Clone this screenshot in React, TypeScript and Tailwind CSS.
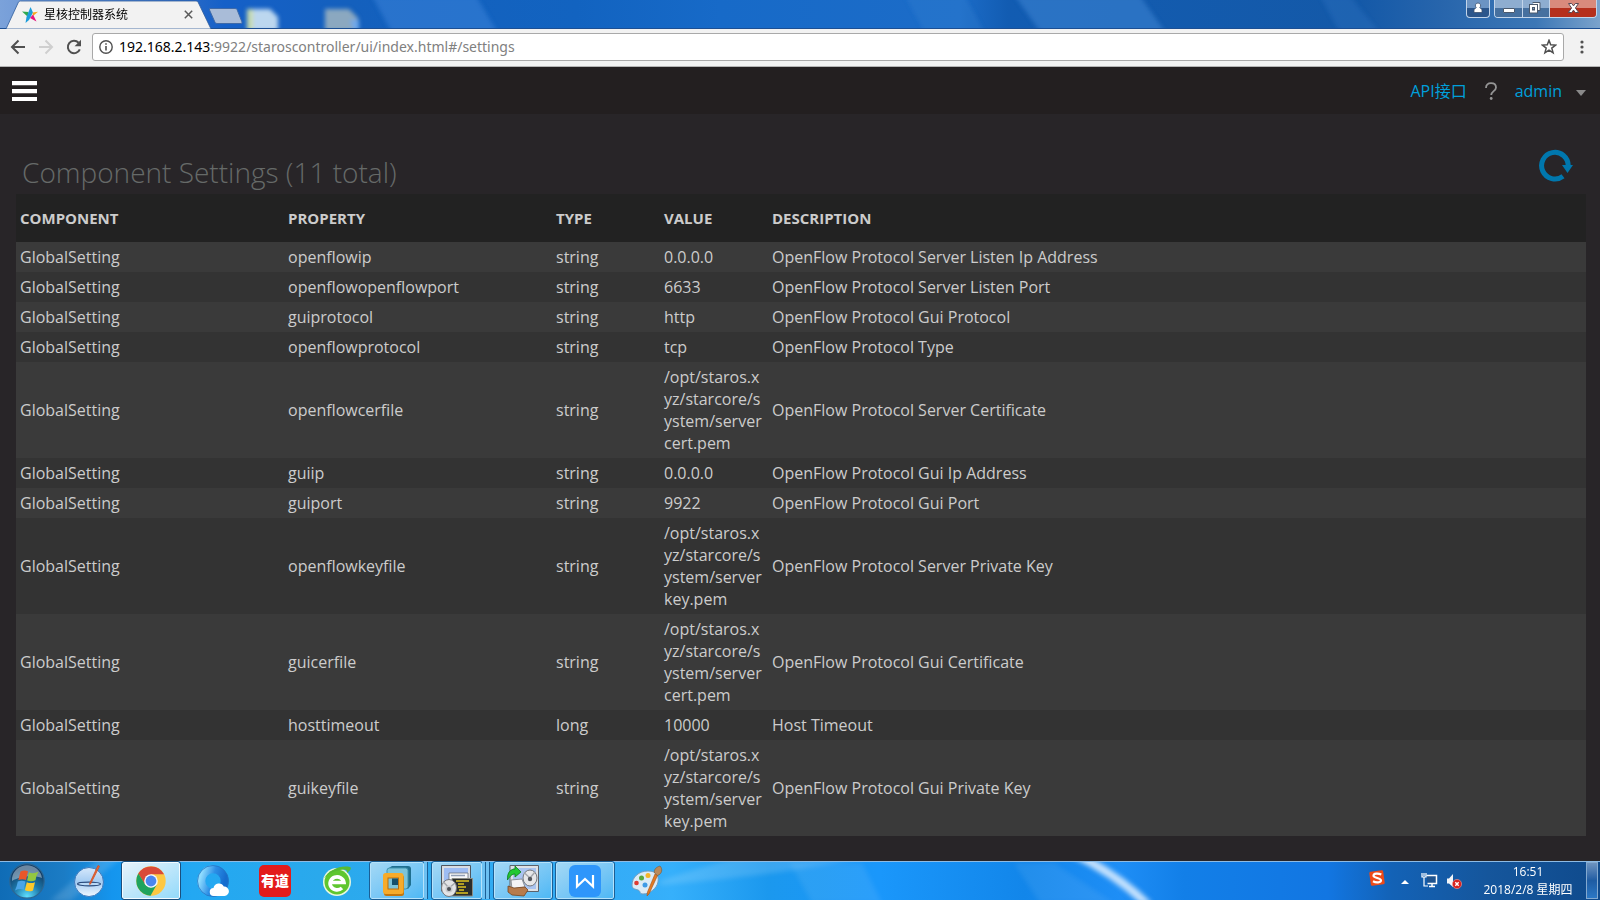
import type { ReactNode } from "react";

type Setting = {
  component: string;
  property: string;
  type: string;
  value: string;
  description: string;
};

const row = (property: string, type: string, value: string, description: string): Setting => ({
  component: "GlobalSetting",
  property,
  type,
  value,
  description,
});

const CERT = "/opt/staros.xyz/starcore/system/servercert.pem";
const KEY = "/opt/staros.xyz/starcore/system/serverkey.pem";

const settings: Setting[] = [
  row("openflowip", "string", "0.0.0.0", "OpenFlow Protocol Server Listen Ip Address"),
  row("openflowopenflowport", "string", "6633", "OpenFlow Protocol Server Listen Port"),
  row("guiprotocol", "string", "http", "OpenFlow Protocol Gui Protocol"),
  row("openflowprotocol", "string", "tcp", "OpenFlow Protocol Type"),
  row("openflowcerfile", "string", CERT, "OpenFlow Protocol Server Certificate"),
  row("guiip", "string", "0.0.0.0", "OpenFlow Protocol Gui Ip Address"),
  row("guiport", "string", "9922", "OpenFlow Protocol Gui Port"),
  row("openflowkeyfile", "string", KEY, "OpenFlow Protocol Server Private Key"),
  row("guicerfile", "string", CERT, "OpenFlow Protocol Gui Certificate"),
  row("hosttimeout", "long", "10000", "Host Timeout"),
  row("guikeyfile", "string", KEY, "OpenFlow Protocol Gui Private Key"),
];

/* ---------- Browser window ---------- */

function SkyBackdrop() {
  return (
    <svg className="absolute inset-0 h-full w-full" viewBox="0 0 1600 29" preserveAspectRatio="none" aria-hidden="true">
      <defs>
        <linearGradient id="sky">
          <stop offset="0" stopColor="#7ba2da" />
          <stop offset="0.05" stopColor="#5f8dd2" />
          <stop offset="0.11" stopColor="#2f6cc6" />
          <stop offset="0.14" stopColor="#1560c8" />
          <stop offset="0.22" stopColor="#1460bd" />
          <stop offset="0.36" stopColor="#1263c0" />
          <stop offset="0.45" stopColor="#176ac8" />
          <stop offset="0.6" stopColor="#1c6cc8" />
          <stop offset="0.63" stopColor="#125cb2" />
          <stop offset="0.85" stopColor="#1459a8" />
          <stop offset="0.9" stopColor="#2765ac" />
          <stop offset="0.96" stopColor="#3c77b6" />
          <stop offset="1" stopColor="#7ba3cc" />
        </linearGradient>
        <filter id="soft">
          <feGaussianBlur stdDeviation="2" />
        </filter>
      </defs>
      <rect width="1600" height="29" fill="url(#sky)" />
      <g filter="url(#soft)">
        <path d="M372-4h104l22 37h-106z" fill="#3b86dc" opacity="0.500" />
        <path d="M905-4h60l20 37h-60z" fill="#3d86d4" opacity="0.250" />
        <path d="M1015-4h125l26 37h-125z" fill="#3f8ad8" opacity="0.500" />
        <path d="M1320-4h30l30 37h-40z" fill="#3f8ad8" opacity="0.200" />
        <path d="M248 9h22l8 8v14h-30z" fill="#bcd7ef" />
        <path d="M247 9h6v22h-6z" fill="#c9dcae" />
        <path d="M325 9h24l9 9v13h-33z" fill="#8ba8c0" />
        <path d="M350 20h9v11h-5z" fill="#6fa8ea" />
      </g>
      <rect y="28" width="1600" height="1" fill="#1c4f93" />
    </svg>
  );
}

function WindowButtons() {
  return (
    <div className="relative flex items-start gap-1 pr-[3px]">
      <button aria-label="Profile" className="h-[18px] w-6 rounded-b-[4px] border border-t-0 border-[#c3d5ea] bg-linear-to-b from-[#6c94c3] from-45% to-[#2b568c] to-50%">
        <svg viewBox="0 0 22 17" className="h-[17px] w-[22px]" aria-hidden="true">
          <path d="M11 3a2.6 2.6 0 0 1 1.700 4.600L15 9.500v3H7v-3l2.300-1.900A2.600 2.600 0 0 1 11 3z" fill="#fff" stroke="#3c5270" strokeWidth="0.800" />
        </svg>
      </button>
      <div className="flex h-[18px] overflow-hidden rounded-b-[4px] border border-t-0 border-[#c3d5ea]">
        <button aria-label="Minimize" className="w-7 border-r border-[#c3d5ea] bg-linear-to-b from-[#8eadd0] from-45% to-[#46709f] to-50%">
          <svg viewBox="0 0 27 17" className="h-[17px] w-[27px]" aria-hidden="true">
            <rect x="8.500" y="8.500" width="11" height="4" rx="0.500" fill="#fff" stroke="#4b5a6e" />
          </svg>
        </button>
        <button aria-label="Restore" className="w-[27px] border-r border-[#c3d5ea] bg-linear-to-b from-[#8eadd0] from-45% to-[#46709f] to-50%">
          <svg viewBox="0 0 26 17" className="h-[17px] w-[26px]" aria-hidden="true">
            <path d="M9.500 2.500h7.500v8h-2" fill="#fff" stroke="#4b5a6e" />
            <rect x="6.500" y="4.500" width="8" height="8.500" fill="#fff" stroke="#4b5a6e" />
            <rect x="9.500" y="7.500" width="2" height="2.500" fill="#7e9cc0" stroke="#4b5a6e" />
          </svg>
        </button>
        <button aria-label="Close" className="w-[46px] bg-linear-to-b from-[#d98a7c] from-45% to-[#b52f1c] to-50%">
          <svg viewBox="0 0 46 17" className="h-[17px] w-[46px]" aria-hidden="true">
            <path d="M18.500 3.500h3.200l1.800 2.400 1.800-2.400h3.200L25.400 8l3.300 4.500h-3.400l-1.800-2.400-1.800 2.400h-3.400L21.600 8z" fill="#fff" stroke="#5a4a55" />
          </svg>
        </button>
      </div>
    </div>
  );
}

function TabStrip() {
  return (
    <div className="relative flex h-[29px] justify-between">
      <SkyBackdrop />
      <div className="relative flex pl-1.5">
        <div className="relative flex h-[29px] w-[206px] items-center pr-4 pl-4">
          <svg className="absolute inset-0 h-full w-full" viewBox="0 0 206 29" aria-hidden="true">
            <path d="M0 29 12.500 2Q13 1 14.500 1H190q1.500 0 2 1l13 27z" fill="#f2f2f2" stroke="#2f5c9a" strokeWidth="0.800" />
          </svg>
          <svg viewBox="0 0 16 16" className="relative h-4 w-4" aria-hidden="true">
            <path d="M0 4.500 6.500 5 6 10z" fill="#2fa84f" />
            <path d="M8.500 0 11 5.500 7 13l-3.500 3 1-6z" fill="#1b9ddb" />
            <path d="M10.500 5.500 16 4.800 11 9z" fill="#f6a71c" />
            <path d="M11 7.500 14.500 14.500 8 11z" fill="#e5157f" />
          </svg>
          <span className="relative ml-1.5 flex-1 text-[12px] leading-4 text-black">星核控制器系统</span>
          <button aria-label="Close tab" className="relative flex h-4 w-4 items-center justify-center">
            <svg viewBox="0 0 9 9" className="h-[9px] w-[9px]" aria-hidden="true">
              <path d="M.8.800 8.200 8.200M8.200.800.800 8.200" stroke="#5a5a5a" strokeWidth="1.500" />
            </svg>
          </button>
        </div>
        <button aria-label="New tab" className="mt-2 -ml-1 h-4 w-9">
          <svg viewBox="0 0 36 16" className="h-4 w-9" aria-hidden="true">
            <path d="M2 .500h25q1.500 0 2 1l5 12.500q.5 1.500-1 1.500H9q-1.500 0-2-1.200L1.500 2Q1 .500 2 .500z" fill="#a9bcd8" stroke="#3f6aa8" />
          </svg>
        </button>
      </div>
      <WindowButtons />
    </div>
  );
}

function AddressBar() {
  return (
    <div className="flex h-[38px] items-start border-b border-[#b4b4b4] bg-[#f2f2f2] pt-1 pr-2">
      <div className="flex h-7 items-center gap-1 px-1.5">
        <button aria-label="Back" className="flex h-6 w-6 items-center justify-center">
          <svg viewBox="0 0 16 16" className="h-4 w-4" aria-hidden="true">
            <path d="M15 8H2.500M8.500 1.500 2 8l6.500 6.500" fill="none" stroke="#505050" strokeWidth="2" />
          </svg>
        </button>
        <button aria-label="Forward" className="flex h-6 w-6 items-center justify-center">
          <svg viewBox="0 0 16 16" className="h-4 w-4" aria-hidden="true">
            <path d="M1 8h12.500M7.500 1.500 14 8l-6.500 6.500" fill="none" stroke="#cfcfcf" strokeWidth="2" />
          </svg>
        </button>
        <button aria-label="Reload" className="flex h-6 w-6 items-center justify-center">
          <svg viewBox="0 0 16 16" className="h-4 w-4" aria-hidden="true">
            <path d="M13.800 10.300A6.200 6.200 0 1 1 12.600 3.800" fill="none" stroke="#505050" strokeWidth="2" />
            <path d="M15 .800v6.400H8.600z" fill="#505050" />
          </svg>
        </button>
      </div>
      <div className="flex h-7 flex-1 items-center rounded-[3px] border border-[#a9a9a9] bg-white px-1.5">
        <svg viewBox="0 0 14 14" className="h-3.5 w-3.5" aria-hidden="true">
          <circle cx="7" cy="7" r="6.200" fill="none" stroke="#505050" strokeWidth="1.400" />
          <path d="M7 6v4.500M7 3.300v1.500" stroke="#505050" strokeWidth="1.600" />
        </svg>
        <a href="#/settings" className="ml-1.5 flex-1 font-['Noto_Sans',sans-serif] text-[14px] leading-5 text-[#808080]">
          <span className="text-black">192.168.2.143</span>:9922/staroscontroller/ui/index.html#/settings
        </a>
        <button aria-label="Bookmark this page">
          <svg viewBox="0 0 16 16" className="h-4 w-4" aria-hidden="true">
            <path d="m8 1.300 1.700 4.500 4.900.3-3.800 3 1.300 4.700L8 11.200l-4.100 2.600 1.300-4.700-3.800-3 4.900-.3z" fill="none" stroke="#505050" strokeWidth="1.500" />
          </svg>
        </button>
      </div>
      <button aria-label="Browser menu" className="ml-2 flex h-7 w-5 items-center justify-center">
        <svg viewBox="0 0 4 14" className="h-3.5 w-1" aria-hidden="true">
          <g fill="#505050">
            <circle cx="2" cy="2" r="1.600" />
            <circle cx="2" cy="7" r="1.600" />
            <circle cx="2" cy="12" r="1.600" />
          </g>
        </svg>
      </button>
    </div>
  );
}

/* ---------- Application ---------- */

function Masthead() {
  return (
    <header className="flex h-[47px] items-center justify-between bg-[#231f20] pr-3.5 pl-3">
      <button aria-label="Menu" className="flex w-[25px] flex-col gap-[3px]">
        <span className="h-[5px] w-full border-b border-[#5c5859] bg-white" />
        <span className="h-[5px] w-full border-b border-[#5c5859] bg-white" />
        <span className="h-1 w-full bg-white" />
      </button>
      <nav className="flex items-center text-[16px] leading-6 text-[#009fdb]">
        <a href="#/api">API接口</a>
        <a href="#/help" aria-label="Help" className="mx-4 block w-4">
          <svg viewBox="0 0 16 20" className="h-5 w-4" aria-hidden="true">
            <path d="M3 7C3 3.800 5 2.200 8 2.200s5 1.600 5 4.300c0 3.500-4.800 3.800-4.800 7.500" fill="none" stroke="#959595" strokeWidth="1.800" />
            <circle cx="8.200" cy="17.500" r="1.400" fill="#959595" />
          </svg>
        </a>
        <button className="flex items-center gap-3.5">
          admin
          <svg viewBox="0 0 10 6" className="mt-1 h-1.5 w-2.5" aria-hidden="true">
            <path d="M0 0h10L5 6z" fill="#8a8a8a" />
          </svg>
        </button>
      </nav>
    </header>
  );
}

function SettingsTable() {
  return (
    <table className="w-full table-fixed border-collapse text-left text-[16px] leading-[22px] text-[#cccccc]">
      <colgroup>
        <col className="w-[268px]" />
        <col className="w-[268px]" />
        <col className="w-[108px]" />
        <col className="w-[108px]" />
        <col />
      </colgroup>
      <thead className="bg-[#222222] text-[15px]">
        <tr className="h-12">
          {["COMPONENT", "PROPERTY", "TYPE", "VALUE", "DESCRIPTION"].map((h) => (
            <th key={h} scope="col" className="px-1 font-bold">
              {h}
            </th>
          ))}
        </tr>
      </thead>
      <tbody>
        {settings.map((s) => (
          <tr key={s.property} className="bg-[#333333] odd:bg-[#3a3a3a]">
            <td className="p-1">{s.component}</td>
            <td className="p-1">{s.property}</td>
            <td className="p-1">{s.type}</td>
            <td className="p-1 break-all">{s.value}</td>
            <td className="p-1">{s.description}</td>
          </tr>
        ))}
      </tbody>
    </table>
  );
}

function SettingsPage() {
  return (
    <main className="flex-1 px-4 pr-3.5 pt-8">
      <div className="flex h-12 items-center justify-between pr-3 pl-1.5">
        <h1 className="pt-1 text-[28px] leading-9 font-light text-[#666a68]">Component Settings (11 total)</h1>
        <button aria-label="Refresh" className="mb-2">
          <svg viewBox="0 0 36 34" className="h-[34px] w-9" aria-hidden="true">
            <path d="M30.200 17A13.300 13.300 0 1 0 25 27.200" fill="none" stroke="#0077ad" strokeWidth="5" />
            <path d="M24 16h11l-5.500 8z" fill="#0077ad" />
          </svg>
        </button>
      </div>
      <SettingsTable />
    </main>
  );
}

/* ---------- Taskbar ---------- */

function StartOrb() {
  return (
    <svg viewBox="0 0 36 36" className="h-9 w-9" aria-hidden="true">
      <defs>
        <radialGradient id="orb" cx="0.5" cy="0.95" r="0.8">
          <stop offset="0" stopColor="#5fe0ff" />
          <stop offset="0.5" stopColor="#1b78ab" />
          <stop offset="1" stopColor="#123a62" />
        </radialGradient>
      </defs>
      <circle cx="18" cy="18" r="17.200" fill="url(#orb)" stroke="#2d6794" strokeWidth="1.200" />
      <path d="M3 15a15.200 15.200 0 0 1 30 0c-7-3-22-2-30 3z" fill="#dbe9f2" opacity="0.450" />
      <path d="M11.500 8.500q4-2 7.500-.2l-2 8.800q-3.500-1.800-7.700 0z" fill="#e8572a" />
      <path d="M20 9.300q4 2 9.500-.6-2.500 4-3 8.600-4 1.700-8.400.3z" fill="#93c740" />
      <path d="M8.800 18.600q4-1.800 7.700 0l-1.800 8.200q-3.600-1.700-8.700.6 2-4 2.800-8.800z" fill="#4aa5e8" />
      <path d="M17.800 19.200q4 1.700 8.200 0l-2 8.300q-4 1.800-8.100-.2z" fill="#fdc92b" />
    </svg>
  );
}

function PenOrbIcon() {
  return (
    <svg viewBox="0 0 34 34" className="h-[34px] w-[34px]" aria-hidden="true">
      <defs>
        <linearGradient id="penorb" x2="0" y2="1">
          <stop offset="0" stopColor="#d5e8fb" />
          <stop offset="0.5" stopColor="#a3cbf2" />
          <stop offset="1" stopColor="#f0f8ff" />
        </linearGradient>
      </defs>
      <circle cx="17" cy="18" r="14.500" fill="url(#penorb)" stroke="#3c79bd" />
      <ellipse cx="17" cy="20" rx="11.500" ry="1.800" fill="#b9d9f6" stroke="#28497a" strokeWidth="1.200" />
      <path d="m26 1.500 1.500.8L18.500 20l-.8.500v-1.200z" fill="#e96a35" stroke="#cf4b1f" strokeWidth="0.800" />
    </svg>
  );
}

function ChromeIcon() {
  return (
    <svg viewBox="0 0 30 30" className="h-[30px] w-[30px]" aria-hidden="true">
      <circle cx="15" cy="15" r="14.700" fill="#fdc843" />
      <path d="M2.300 7.600A14.700 14.700 0 0 1 28 8.300H15L9 18.500z" fill="#d94a38" />
      <path d="M2.300 7.600A14.700 14.700 0 0 0 14.500 29.700L20.800 18.500l-6 3-5.700-3.200z" fill="#1ea35e" />
      <circle cx="15" cy="15" r="6.800" fill="#f5f8fd" />
      <circle cx="15" cy="15" r="5.400" fill="#4b86ee" />
    </svg>
  );
}

function CloudRingIcon() {
  return (
    <svg viewBox="0 0 32 32" className="h-8 w-8" aria-hidden="true">
      <defs>
        <linearGradient id="ring" x1="0" y1="0.2" x2="1" y2="0.5">
          <stop offset="0" stopColor="#8fdcff" />
          <stop offset="0.5" stopColor="#2c8fe6" />
          <stop offset="1" stopColor="#156cce" />
        </linearGradient>
      </defs>
      <circle cx="16" cy="16" r="11.700" fill="none" stroke="url(#ring)" strokeWidth="8" />
      <circle cx="16" cy="16" r="15.500" fill="none" stroke="#2476c4" strokeWidth="0.800" />
      <path d="M17 31a4 4 0 0 1-.5-8 5.500 5.500 0 0 1 10.300-1.500A4.700 4.700 0 0 1 27.500 31z" fill="#fff" />
    </svg>
  );
}

function YoudaoIcon() {
  return (
    <span className="flex h-8 w-8 items-center justify-center rounded-[5px] bg-[#e31b1b] text-[14px] leading-8 font-black whitespace-nowrap text-white">
      有道
    </span>
  );
}

function GreenBrowserIcon() {
  return (
    <svg viewBox="0 0 32 32" className="h-8 w-8" aria-hidden="true">
      <circle cx="16" cy="17" r="14" fill="#e9f8df" />
      <circle cx="16" cy="17" r="12.500" fill="#5fc62e" />
      <path d="M9.500 17.500H23a7 6.500 0 1 0-2 5.500" fill="none" stroke="#fff" strokeWidth="3.600" />
      <path d="M3 13C9 5 19 0 29 2c2 1 0 4-3 6 1-4-3-4-7-3C12 6.500 7 9 3 13z" fill="#57bb32" />
    </svg>
  );
}

function VirtualMachineIcon() {
  return (
    <svg viewBox="0 0 32 32" className="h-8 w-8" aria-hidden="true">
      <path d="m8 3 3-2h16q3 0 3 3v16l-3 4H8z" fill="#1f6f90" />
      <rect x="6" y="3" width="21" height="21" rx="2.500" fill="#7cc4da" stroke="#3e93b0" />
      <rect x="15" y="11" width="7" height="8" fill="#14506c" />
      <rect x="3" y="10" width="20" height="21" rx="2.500" fill="#c4760d" />
      <rect x="2" y="8" width="20.500" height="21" rx="2.500" fill="#f6ab2b" />
      <rect x="7" y="13" width="10.500" height="11" fill="#7cc4da" stroke="#b76e0e" />
      <rect x="11" y="13.500" width="6" height="6.500" fill="#14506c" />
    </svg>
  );
}

function TerminalDiskIcon() {
  return (
    <svg viewBox="0 0 32 32" className="h-8 w-8" aria-hidden="true">
      <path d="M.5.500h29V26H.5z" fill="#d9dde3" stroke="#4f565f" />
      <path d="M3 3h24v18H3z" fill="#9dbcf3" />
      <path d="M8 8h19v10H8z" fill="#f6f7f9" stroke="#6b727b" strokeWidth="0.800" />
      <path d="M10 10.500h14" stroke="#909eb5" strokeWidth="1.500" />
      <path d="M11 13.500h20.500V31H11z" fill="#2b2d2c" stroke="#8a8c84" />
      <path d="M15 16h13M17 19h6M17 22h8M18 25h5M15 28h12" stroke="#e0c321" strokeWidth="1.500" />
      <ellipse cx="8" cy="23" rx="7.500" ry="8.500" fill="#e3e4e6" stroke="#74777c" />
      <path d="M2 16.500 8 23l6-5" stroke="#a5a8ad" strokeWidth="1.500" fill="none" />
      <circle cx="8" cy="24" r="3.500" fill="#c6c8cc" />
      <circle cx="8" cy="24" r="2" fill="#4e5156" />
    </svg>
  );
}

function DiskTransferIcon() {
  return (
    <svg viewBox="0 0 32 32" className="h-8 w-8" aria-hidden="true">
      <path d="M3 .500h28.500v26H3z" fill="#dfe2e6" stroke="#5b626b" />
      <path d="M6 3h23v21H6z" fill="#a9c4f0" />
      <ellipse cx="23" cy="13" rx="7" ry="8" fill="#e6e7e9" stroke="#74777c" />
      <path d="M17 7.500 23 13l5-6" stroke="#a5a8ad" strokeWidth="1.500" fill="none" />
      <circle cx="23" cy="14" r="2.200" fill="#55585d" />
      <path d="M.5 15C0 7 4 4 8 4V1l6 6-6 5V9c-3 0-5 2-7.500 6z" fill="#22c832" stroke="#0f7a1c" strokeWidth="0.800" />
      <path d="m4 15 11-1 3 8-13 2z" fill="#f4f4f6" stroke="#7a7d83" strokeWidth="0.800" />
      <path d="m1 21 6 2 11-1 3 3-4 6-12-1-4-3z" fill="#b77b4c" stroke="#76451f" strokeWidth="0.800" />
    </svg>
  );
}

function OfficeIcon() {
  return (
    <svg viewBox="0 0 32 32" className="h-8 w-8" aria-hidden="true">
      <rect width="32" height="32" rx="6" fill="#2e96fb" />
      <path d="M8 10v11.500l8-7.500 8 7.500V10" fill="none" stroke="#fff" strokeWidth="2.200" />
    </svg>
  );
}

function PaintIcon() {
  return (
    <svg viewBox="0 0 32 32" className="h-8 w-8" aria-hidden="true">
      <path d="M1 20C1 12 8 6 17 6s11 5 10 11-8 12-15 12c-4 0-2-3-5-4s-6-1-6-5z" fill="#dcebf6" stroke="#6f9cc0" />
      <circle cx="5.500" cy="18" r="2.300" fill="#df3b31" />
      <circle cx="10.500" cy="13" r="2.500" fill="#58a83e" />
      <circle cx="17" cy="10.500" r="2.500" fill="#f5b527" />
      <circle cx="14" cy="20" r="2.500" fill="#3f9be6" />
      <path d="m24 9 2.500 1.500L18 29l-2 2 .5-4z" fill="#e27a24" stroke="#a8500f" strokeWidth="0.600" />
      <path d="M23.500 8C22.500 5 25 2 29 1c3 3 2 8-2.500 9.500z" fill="#b98a5c" stroke="#7c5732" strokeWidth="0.600" />
    </svg>
  );
}

type TaskState = "idle" | "open" | "active";

function TaskButton({ label, state = "idle", stack = 0, children }: { label: string; state?: TaskState; stack?: number; children: ReactNode }) {
  const face =
    state === "active"
      ? "border-[#f4fbff] bg-linear-to-br from-[#e6f2fa] to-[#93dafa] outline-1 outline-[#1b4f7d]"
      : state === "open"
        ? "border-[#b5e2fb] bg-linear-to-br from-[#a3d8f5] to-[#4db8f5] outline-1 outline-[#1b5f96]"
        : "border-transparent";
  return (
    <button aria-label={label} className="flex h-[37px] w-[58px]">
      <span className={`flex h-full min-w-0 flex-1 items-center justify-center rounded-[2px] border ${face}`}>{children}</span>
      {stack > 0 && <span className="h-full w-1 border-r border-[#1b5f96] bg-[#6cc0f2]" />}
      {stack > 1 && <span className="h-full w-1 border-r border-[#1b5f96] bg-[#6cc0f2]" />}
    </button>
  );
}

function TaskbarBackdrop() {
  return (
    <svg className="absolute inset-0 h-full w-full" viewBox="0 0 1600 39" preserveAspectRatio="none" aria-hidden="true">
      <defs>
        <linearGradient id="bar">
          <stop offset="0" stopColor="#0f6cb6" />
          <stop offset="0.04" stopColor="#1b7cc5" />
          <stop offset="0.07" stopColor="#1495ee" />
          <stop offset="0.12" stopColor="#23a8f2" />
          <stop offset="0.2" stopColor="#2aa9ec" />
          <stop offset="0.4" stopColor="#35adf8" />
          <stop offset="0.42" stopColor="#36b0fb" />
          <stop offset="0.48" stopColor="#1b98ee" />
          <stop offset="0.55" stopColor="#1a97fb" />
          <stop offset="0.64" stopColor="#1286ea" />
          <stop offset="0.7" stopColor="#1e8ef6" />
          <stop offset="0.74" stopColor="#127fe8" />
          <stop offset="0.83" stopColor="#1276e2" />
          <stop offset="0.87" stopColor="#1362b6" />
          <stop offset="0.93" stopColor="#15569c" />
          <stop offset="1" stopColor="#0f4a8c" />
        </linearGradient>
        <filter id="glow">
          <feGaussianBlur stdDeviation="2.500" />
        </filter>
      </defs>
      <rect width="1600" height="39" fill="url(#bar)" />
      <g filter="url(#glow)">
        <path d="M660 20Q700 6 740-4h120q-60 16-200 28z" fill="#fff" opacity="0.140" />
        <path d="M790 2h72l20 40h-70z" fill="#fff" opacity="0.080" />
        <path d="M1014 2h40l60 40h-74z" fill="#fff" opacity="0.070" />
        <path d="M1072-4h18q36 20 62 46h-12q-28-26-68-46z" fill="#c6e2fd" />
        <path d="M50 40 100-4h22L70 40z" fill="#fff" opacity="0.140" />
      </g>
      <rect width="1600" height="1" fill="#8ebbe4" />
    </svg>
  );
}

function Tray() {
  return (
    <div className="relative flex items-center">
      <div className="flex items-center">
        <svg viewBox="0 0 16 16" className="mb-1.5 h-4 w-4" role="img" aria-label="Input method">
          <rect x="1" y="1" width="14" height="14" rx="1.500" fill="#ee4a18" transform="rotate(-8 8 8)" />
          <path d="M12.300 4.500C9 3 4.500 3.300 4.500 5.700S12 7.800 12 10.300s-5 2.700-8 1" fill="none" stroke="#fff" strokeWidth="2.200" />
        </svg>
        <button aria-label="Show hidden icons" className="ml-4 flex h-4 w-2">
          <svg viewBox="0 0 8 16" className="h-4 w-2" aria-hidden="true">
            <path d="M0 11h8L4 7z" fill="#fff" />
          </svg>
        </button>
        <svg viewBox="0 0 17 17" className="ml-3 h-[17px] w-[17px]" role="img" aria-label="Network">
          <path d="M5.500 3.500h10v8h-9M8 14.500h6M11 12v2" fill="#20548f" stroke="#fff" strokeWidth="1.500" />
          <path d="M1 1v4h4V1M3 1v3M3 5v9h4" fill="none" stroke="#fff" strokeWidth="1.200" />
        </svg>
        <svg viewBox="0 0 16 16" className="ml-2 h-4 w-4" role="img" aria-label="Muted">
          <path d="M1 5.500h2L7 1v13L3 10.500H1z" fill="#f2f5f9" />
          <circle cx="11" cy="11" r="4.600" fill="#d8231f" stroke="#f3a09b" strokeWidth="0.600" />
          <path d="m9.300 9.300 3.400 3.400m0-3.400-3.400 3.400" stroke="#fff" strokeWidth="1.400" />
        </svg>
      </div>
      <div className="mr-2 ml-4 w-[100px] text-center text-[12px] leading-[18px] whitespace-nowrap text-white">
        <div>16:51</div>
        <div>2018/2/8 星期四</div>
      </div>
      <button aria-label="Show desktop" className="mr-0.5 h-[37px] w-3 border border-[#83a9d0] bg-linear-to-b from-[#6d93bf] via-[#1e5ca3] to-[#2c78c5]" />
    </div>
  );
}

function Taskbar() {
  return (
    <footer className="relative flex h-[39px] justify-between">
      <TaskbarBackdrop />
      <div className="relative flex items-center gap-1">
        <button aria-label="Start" className="flex w-14 items-center pl-[9px]">
          <StartOrb />
        </button>
        <TaskButton label="Notes"><PenOrbIcon /></TaskButton>
        <TaskButton label="Chrome" state="active"><ChromeIcon /></TaskButton>
        <TaskButton label="Cloud browser"><CloudRingIcon /></TaskButton>
        <TaskButton label="有道"><YoudaoIcon /></TaskButton>
        <TaskButton label="Web browser"><GreenBrowserIcon /></TaskButton>
        <TaskButton label="Virtual machines" state="open" stack={1}><VirtualMachineIcon /></TaskButton>
        <TaskButton label="Terminal" state="open" stack={2}><TerminalDiskIcon /></TaskButton>
        <TaskButton label="File transfer" state="open"><DiskTransferIcon /></TaskButton>
        <TaskButton label="Office" state="open"><OfficeIcon /></TaskButton>
        <TaskButton label="Paint"><PaintIcon /></TaskButton>
      </div>
      <Tray />
    </footer>
  );
}

export default function App() {
  return (
    <div className="flex min-h-screen flex-col bg-[#282528] font-['Open_Sans','Noto_Sans_CJK_SC',sans-serif]">
      <TabStrip />
      <AddressBar />
      <Masthead />
      <SettingsPage />
      <Taskbar />
    </div>
  );
}
